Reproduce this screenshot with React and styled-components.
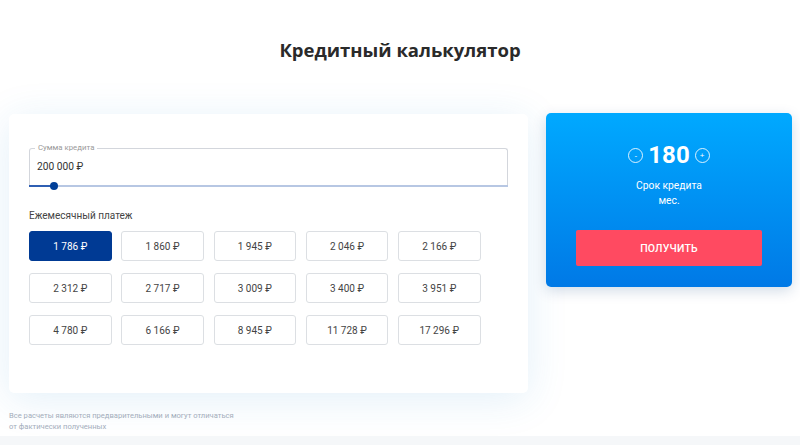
import React, { useState } from 'react'
import styled, { createGlobalStyle } from 'styled-components'

const GlobalStyle = createGlobalStyle`
  html, body {
    margin: 0;
    padding: 0;
    background: #fff;
    font-family: Roboto, 'Noto Sans', sans-serif;
  }
  * { box-sizing: border-box; }
`

const Page = styled.div`
  width: 800px;
  height: 445px;
  overflow: hidden;
  display: flex;
  flex-direction: column;
  background: linear-gradient(#fff 0, #fff 436px, #f5f7f9 436px);
`

const Title = styled.h2`
  margin: 36px 0 0;
  height: 28px;
  text-align: center;
  font-family: 'Open Sans', sans-serif;
  font-weight: 700;
  font-size: 18.5px;
  line-height: 28px;
  color: #2a2a2a;
`

const Row = styled.div`
  display: flex;
  align-items: flex-start;
  gap: 18px;
  padding: 49px 8px 0 9px;
`

const LeftCol = styled.div`
  width: 519px;
  margin-top: 1px;
  display: flex;
  flex-direction: column;
`

const Card = styled.div`
  height: 279px;
  background: #fff;
  border-radius: 5px;
  box-shadow: 0 6px 40px rgba(40, 140, 210, 0.13);
  padding: 29px 20px 0 20px;
`

const Field = styled.fieldset`
  margin: 0;
  height: 42px;
  border: 1px solid #d3d6dc;
  border-bottom: none;
  border-radius: 3px 3px 0 0;
  padding: 0 7px;
  legend {
    padding: 0 3px;
    margin-left: -2px;
    font-size: 7.8px;
    line-height: 10px;
    color: #9a9a9a;
  }
`

const Value = styled.div`
  font-size: 10.2px;
  line-height: 14px;
  color: #333;
  margin-top: 7px;
`

const Track = styled.div`
  position: relative;
  height: 2px;
  background: #b7c7e3;
`

const TrackFill = styled.div`
  height: 100%;
  background: #2f5fb3;
`

const Thumb = styled.div`
  position: absolute;
  top: -3px;
  width: 8px;
  height: 8px;
  margin-left: -4px;
  border-radius: 50%;
  background: #003f98;
`

const Label = styled.div`
  margin-top: 22px;
  font-size: 10px;
  line-height: 14px;
  color: #444;
`

const Grid = styled.div`
  margin-top: 8px;
  display: grid;
  grid-template-columns: repeat(5, 82.5px);
  column-gap: 9.75px;
  row-gap: 12px;
`

const Amount = styled.button`
  height: 30px;
  border-radius: 3px;
  border: 1px solid ${p => (p.$active ? '#003a94' : '#dcdfe3')};
  background: ${p => (p.$active ? '#003a94' : '#fff')};
  color: ${p => (p.$active ? '#fff' : '#444')};
  font-family: Roboto, sans-serif;
  font-size: 10px;
  padding: 0;
  cursor: pointer;
`

const Note = styled.p`
  margin: 18px 0 0;
  font-size: 7.6px;
  line-height: 10.5px;
  color: #a3adbb;
`

const Term = styled.div`
  width: 246px;
  height: 174px;
  border-radius: 5px;
  background: linear-gradient(#00a9ff, #0079e6);
  box-shadow: 0 4px 14px rgba(0, 60, 120, 0.18);
  display: flex;
  flex-direction: column;
  align-items: center;
  padding-top: 28px;
  color: #fff;
`

const Counter = styled.div`
  display: flex;
  align-items: center;
  gap: 4px;
  height: 28px;
`

const Number = styled.span`
  font-size: 24px;
  font-weight: 700;
  line-height: 28px;
  margin: 0 1px;
`

const Round = styled.button`
  width: 15px;
  height: 15px;
  border-radius: 50%;
  border: 1px solid rgba(255, 255, 255, 0.85);
  background: transparent;
  color: #fff;
  font-size: 8px;
  line-height: 13px;
  padding: 0;
  display: flex;
  align-items: center;
  justify-content: center;
  cursor: pointer;
`

const TermText = styled.div`
  margin-top: 9px;
  text-align: center;
  font-size: 10.3px;
  line-height: 15px;
`

const Cta = styled.button`
  margin-top: 22px;
  width: 186px;
  height: 36px;
  border: none;
  border-radius: 2px;
  background: #ff4a61;
  color: #fff;
  font-family: Roboto, sans-serif;
  font-weight: 500;
  font-size: 10.5px;
  letter-spacing: 0.2px;
  cursor: pointer;
`

const payments = [
  '1 786', '1 860', '1 945', '2 046', '2 166',
  '2 312', '2 717', '3 009', '3 400', '3 951',
  '4 780', '6 166', '8 945', '11 728', '17 296',
]

export default function App() {
  const [selected, setSelected] = useState(0)
  const [term, setTerm] = useState(180)

  return (
    <Page>
      <GlobalStyle />
      <Title>Кредитный калькулятор</Title>
      <Row>
        <LeftCol>
          <Card>
            <Field>
              <legend>Сумма кредита</legend>
              <Value>200 000 ₽</Value>
            </Field>
            <Track>
              <TrackFill style={{ width: '5.3%' }} />
              <Thumb style={{ left: '5.3%' }} />
            </Track>
            <Label>Ежемесячный платеж</Label>
            <Grid>
              {payments.map((p, i) => (
                <Amount key={p} $active={i === selected} onClick={() => setSelected(i)}>
                  {p} ₽
                </Amount>
              ))}
            </Grid>
          </Card>
          <Note>
            Все расчеты являются предварительными и могут отличаться
            <br />
            от фактически полученных
          </Note>
        </LeftCol>
        <Term>
          <Counter>
            <Round onClick={() => setTerm(t => t - 1)}>-</Round>
            <Number>{term}</Number>
            <Round onClick={() => setTerm(t => t + 1)}>+</Round>
          </Counter>
          <TermText>
            Срок кредита
            <br />
            мес.
          </TermText>
          <Cta>ПОЛУЧИТЬ</Cta>
        </Term>
      </Row>
    </Page>
  )
}
